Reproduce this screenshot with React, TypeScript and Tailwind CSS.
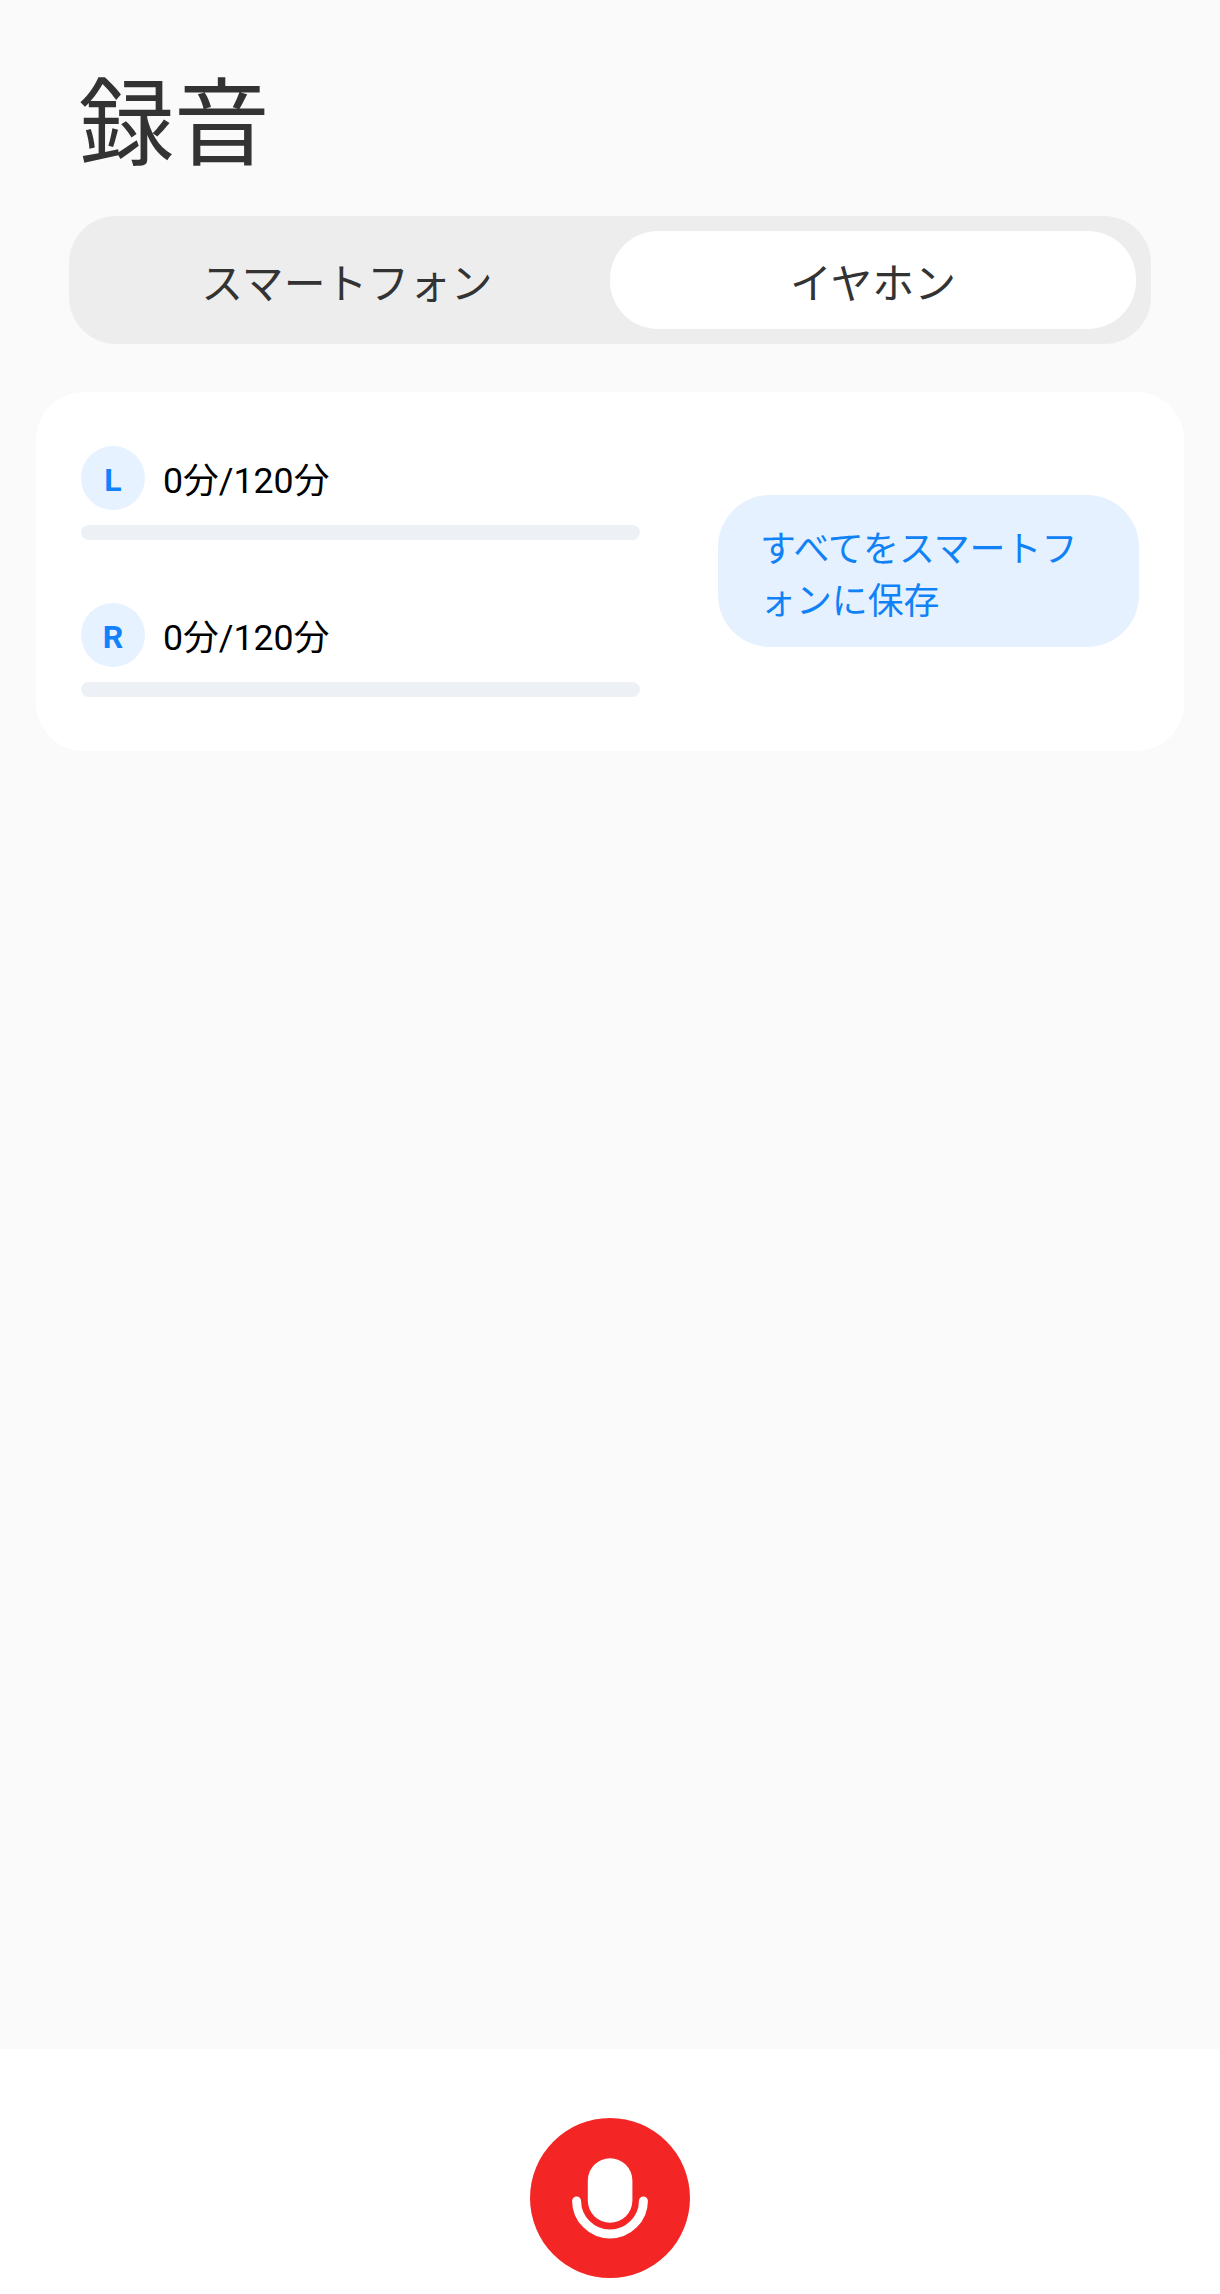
// library
import { useState } from 'react';
import clsx from 'clsx';

const TABS = [
    { id: 'phone', label: 'スマートフォン' },
    { id: 'earphone', label: 'イヤホン' }
];

const STORAGE = [
    { side: 'L', used: 0, total: 120 },
    { side: 'R', used: 0, total: 120 }
];

const MicIcon = () => (
    <svg width="160" height="160" viewBox="0 0 160 160" fill="none">
        <rect x="57.8" y="40.3" width="44.6" height="64.4" rx="22.3" fill="#fff" />
        <path d="M46.6 83c0 17.8 15 33 33.4 33s33.4-15.2 33.4-33" stroke="#fff" strokeWidth="9" strokeLinecap="round" />
    </svg>
);

const StorageRow = ({ side, used, total }: { side: string; used: number; total: number }) => (
    <div>
        <div className="flex h-16 items-center">
            <span className="flex size-16 items-center justify-center rounded-full bg-[#e6f2ff] pt-[3px] text-[32px] leading-none font-bold text-[#1182fb]">
                {side}
            </span>
            <span className="ml-[18px] pt-[7px] text-[35.7px] leading-none text-black">
                {used}分/{total}分
            </span>
        </div>
        <div className="mt-[15px] h-[15px] w-[559px] overflow-hidden rounded-lg bg-[#edf1f6]">
            <div className="h-full bg-[#1182fb]" style={{ width: `${(used / total) * 100}%` }} />
        </div>
    </div>
);

const App = () => {
    const [tab, setTab] = useState('earphone');

    return (
        <div className="flex h-[2294px] w-[1220px] flex-col bg-[#fafafa] font-[Roboto,'Noto_Sans_CJK_JP',sans-serif]">
            <h1 className="mt-[55px] ml-[78.5px] text-[95.5px] leading-[140px] text-[#333]">録音</h1>

            <div className="mx-[69px] mt-[21px] flex h-32 rounded-[47px] bg-[#ededed] p-[15px]">
                {TABS.map((t) => (
                    <button
                        key={t.id}
                        onClick={() => setTab(t.id)}
                        className={clsx('flex-1 rounded-[48px] pt-2.5 text-[41.8px] leading-none text-[#333]', tab === t.id && 'bg-white')}
                    >
                        {t.label}
                    </button>
                ))}
            </div>

            <div className="mx-9 mt-12 flex h-[359px] items-start justify-between rounded-[48px] bg-white px-[45px]">
                <div className="mt-[54px] flex flex-col gap-[63px]">
                    {STORAGE.map((s) => (
                        <StorageRow key={s.side} {...s} />
                    ))}
                </div>
                <button className="mt-[103px] h-[152px] w-[421px] rounded-[52px] bg-[#e5f1ff] px-[42px] pt-2.5 text-left text-[35.9px] leading-[52px] break-all text-[#1182f5]">
                    すべてをスマートフォンに保存
                </button>
            </div>

            <div className="mt-auto flex h-[245px] justify-center bg-white pt-[69px]">
                <button className="size-40 rounded-full bg-[#f42525]">
                    <MicIcon />
                </button>
            </div>
        </div>
    );
};

export default App;
